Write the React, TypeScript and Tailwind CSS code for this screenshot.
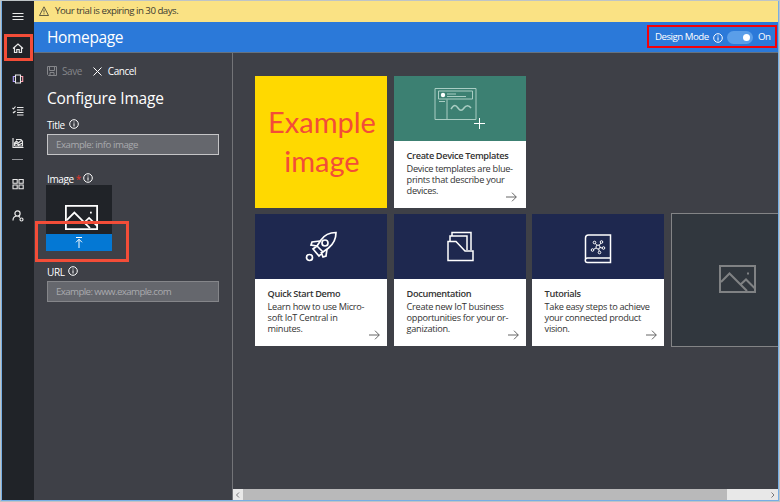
import type { ReactNode } from "react";

const stroke = {
  fill: "none",
  stroke: "currentColor",
} as const;

function InfoIcon() {
  return (
    <svg className="size-[10px] shrink-0" viewBox="0 0 10 10" {...stroke} strokeWidth="1">
      <circle cx="5" cy="5" r="4.3" />
      <path d="M5 4.3v3.2M5 2.5v1" />
    </svg>
  );
}

function PictureIcon({ className }: { className: string }) {
  return (
    <svg className={className} viewBox="0 0 37 28" {...stroke} strokeWidth="2">
      <path d="M1 1h35v26H1z" />
      <path d="M2 17l8.500-8.500L28 26M21 20l6-5.500 9 9M22 20l6 6" />
      <path d="M28 8.500h2" />
    </svg>
  );
}

function ArrowIcon({ className }: { className: string }) {
  return (
    <svg
      className={`absolute bottom-[6px] h-[10px] w-[11px] text-[#555] ${className}`}
      viewBox="0 0 11 10"
      {...stroke}
      strokeWidth="0.9"
    >
      <path d="M0 5h10.200M6 .7L10.300 5 6 9.300" />
    </svg>
  );
}

function TemplateArt() {
  return (
    <svg className="absolute left-[40px] top-[11px] h-[43px] w-[53px]" viewBox="0 0 53 43" {...stroke}>
      <g stroke="#a9cdc3" strokeWidth="1">
        <path d="M1 1.500h41v31H1zM4.500 4h34v8h-34zM13 12.500V32M5 14.500h6M13 7h9M13 9.500h19" />
        <path d="M17 22c3-5 5-4 7-1s4 3 6 0 5-3 7 0" strokeWidth="1.500" />
      </g>
      <circle cx="9" cy="8" r="2.200" fill="white" stroke="none" />
      <path d="M45.500 31v11M40 36.500h11" stroke="white" />
    </svg>
  );
}

function RocketArt() {
  return (
    <svg className="absolute left-[50px] top-[17px] h-[31px] w-[33px]" viewBox="0 0 33 31" {...stroke} strokeWidth="1.700">
      <path d="M31 1.500c-7 0-12 3-15 7.500l-4 6 6 6 5.500-4C28.500 13 31 8 31 1.500z" />
      <circle cx="20" cy="12" r="3" />
      <path d="M15 10l-8 1-1 3 6 1M22 18l-1 7-3 1-2-5M12 15l-4 3 6 7 4-4" />
      <circle cx="4.500" cy="26.500" r="3" />
    </svg>
  );
}

function FolderArt() {
  return (
    <svg className="absolute left-[53px] top-[17px] h-[31px] w-[27px]" viewBox="0 0 27 31" {...stroke} strokeWidth="1.500">
      <path d="M1 10.500h8l9 9.500h8v9.500H1zM3 10V5h17v14M5 5V1.500h19V19" />
    </svg>
  );
}

function BookArt() {
  return (
    <svg className="absolute left-[52px] top-[19px] h-[31px] w-[28px]" viewBox="0 0 28 31" {...stroke} strokeWidth="1.500">
      <path d="M26.500 25H3.500c-3 0-3 4.500 0 4.500h23V2H4.500C2.500 2 1.500 3 1.500 5v22" />
      <g strokeWidth="1">
        <circle cx="14" cy="14" r="2" />
        <circle cx="10.500" cy="9.500" r="1.300" />
        <circle cx="17.500" cy="9" r="1.300" />
        <circle cx="19.500" cy="15" r="1.300" />
        <circle cx="15.500" cy="19.500" r="1.300" />
        <circle cx="8.500" cy="17" r="1.300" />
        <path d="M11.500 10.500l1.500 2M17 10l-2 2.500M18 15l-2-.5M15.200 18l-.5-2M9.700 16.300l2.300-1.300" />
      </g>
    </svg>
  );
}

function Tile({
  art,
  title,
  lines,
  color = "bg-[#1e284f]",
  arrow = "right-[7px]",
}: {
  art: ReactNode;
  title: string;
  lines: string[];
  color?: string;
  arrow?: string;
}) {
  return (
    <article className="relative h-[132px] w-[132px] shrink-0 bg-white text-[#333]">
      <div className={`relative h-[65px] text-white ${color}`}>{art}</div>
      <div className="whitespace-nowrap pl-[12.6px] pt-[9px]">
        <h2 className="text-[9.2px] font-semibold leading-[12px] tracking-[-0.35px]">{title}</h2>
        <div className="mt-[1px] text-[9.2px] leading-[11px] tracking-[-0.3px]">
          {lines.map((line) => (
            <p key={line}>{line}</p>
          ))}
        </div>
      </div>
      <ArrowIcon className={arrow} />
    </article>
  );
}

function Sidebar() {
  return (
    <nav className="relative flex w-[32px] shrink-0 flex-col items-center bg-[#202328] pr-px text-[#e9e9e9]">
      <svg className="mt-[10px] size-[12px]" viewBox="0 0 12 12" {...stroke}>
        <path d="M.5 2.500h11M.5 5.500h11M.5 8.500h11" strokeWidth="1.200" />
      </svg>
      <svg className="mt-[19px] size-[12px]" viewBox="0 0 12 12" {...stroke} strokeWidth="1.200">
        <path d="M1 6.500L6 2l5 4.500M2.500 5.500v5h2.300V7.500h2.400v3h2.300v-5" />
      </svg>
      <svg className="mt-[19px] size-[12px]" viewBox="0 0 12 12" {...stroke} strokeWidth="1.100">
        <path d="M3.500 2h5v8h-5z" />
        <path d="M3 3.500H1.300v5H3" stroke="#b7a4ff" />
        <path d="M9 3.500h1.700v5H9" stroke="#ff9eae" />
      </svg>
      <svg className="mt-[20px] size-[12px]" viewBox="0 0 12 12" {...stroke} strokeWidth="1.100">
        <path d="M5 2.500h6.500M5 5h6.500M5 7.500h6.500M5 10h6.500M.5 3l1 1L3.500 1.500M1 7l.7.700L3.500 6" />
      </svg>
      <svg className="mt-[20px] size-[12px]" viewBox="0 0 12 12" {...stroke} strokeWidth="1.100">
        <path d="M1 1v9.500h10.500M2.500 9V6l2-2 2 2 2-2h2v5H2.500M4 2.500h5l1 1.500M2.500 7.500l2-1.500 2 2 4-2" />
      </svg>
      <div className="mt-[10px] h-px w-[11px] bg-[#94969a]" />
      <svg className="mt-[18px] size-[12px]" viewBox="0 0 12 12" {...stroke} strokeWidth="1.100">
        <path d="M1 1.500h4.200v3.700H1zM7 1.500h4.200v3.700H7zM1 7h4.200v3.700H1zM7 7h4.200v3.700H7z" />
      </svg>
      <svg className="mt-[20px] size-[12px]" viewBox="0 0 12 12" {...stroke} strokeWidth="1.200">
        <circle cx="5.500" cy="3.500" r="2.600" />
        <path d="M1 10.500c0-2.500 1.500-4.200 3.500-4.500M6.500 6l1.500 1.500" />
        <circle cx="9.500" cy="9.500" r="1.500" />
      </svg>
      <div className="absolute left-[2px] top-[33px] h-[27px] w-[29px] border-[3px] border-[#f34d38]" />
    </nav>
  );
}

function Label({ text, required }: { text: string; required?: boolean }) {
  return (
    <div className="flex h-[12px] items-center text-[10px] leading-[12px] tracking-[-0.4px] text-white">
      <span>{text}</span>
      {required && <span className="ml-[2px] -mr-[2px] text-[#e0362b]">*</span>}
      <span className="ml-[4px] -mt-[2px] flex">
        <InfoIcon />
      </span>
    </div>
  );
}

function ConfigPanel() {
  return (
    <aside className="w-[199px] shrink-0 border-r border-[#737478] bg-[#3e4047] pl-[13px] text-white">
      <div className="mt-[12px] flex h-[12px] items-center text-[10px] tracking-[-0.45px]">
        <svg className="size-[10px] text-[#85868a]" viewBox="0 0 10 10" {...stroke}>
          <path d="M.5.5h9v9h-8l-1-1zM2.500.5v4h5v-4M3 9.500v-3h4v3" />
        </svg>
        <span className="ml-[5px] text-[#85868a]">Save</span>
        <svg className="ml-[11px] size-[9px]" viewBox="0 0 9 9" {...stroke}>
          <path d="M.5.5l8 8M8.500.5l-8 8" />
        </svg>
        <span className="ml-[6px]">Cancel</span>
      </div>
      <h2 className="mt-[11px] h-[20px] text-[15.5px] leading-[20px] tracking-[-0.15px]">Configure Image</h2>
      <div className="mt-[11px]">
        <Label text="Title" />
      </div>
      <div className="mt-[3px] h-[21px] w-[172px] border border-[#c5c5c7] bg-[#65676d] pl-[8px] text-[9.7px] leading-[19px] tracking-[-0.48px] text-[#a9aaad]">
        Example: info image
      </div>
      <div className="mt-[18px]">
        <Label text="Image" required />
      </div>
      <div className="relative -ml-px h-[66px] w-[66px] bg-[#202328]">
        <PictureIcon className="absolute left-[19px] top-[20px] h-[25px] w-[33px]" />
        <div className="absolute inset-x-0 bottom-0 flex h-[17px] items-center justify-center bg-[#0478d4]">
          <svg className="h-[11px] w-[8px]" viewBox="0 0 8 11" {...stroke}>
            <path d="M1 .5h6M4 2v9M1 5.300l3-3 3 3" />
          </svg>
        </div>
        <div className="absolute -left-[11px] top-[36px] h-[41px] w-[94px] border-[3px] border-[#f34d38]" />
      </div>
      <div className="mt-[15px]">
        <Label text="URL" />
      </div>
      <div className="mt-[3px] h-[21px] w-[172px] border border-[#85868a] bg-[#65676d] pl-[8px] text-[9.7px] leading-[19px] tracking-[-0.6px] text-[#a9aaad]">
        Example: www.example.com
      </div>
    </aside>
  );
}

export default function App() {
  return (
    <div className="h-[502px] w-[780px] overflow-hidden border-x border-y border-[#bec4c6] font-['Open_Sans','Noto_Sans',sans-serif]">
      <div className="flex h-[500px] w-[778px] border-x border-b border-[#77aee4]">
        <Sidebar />
        <div className="flex min-w-0 flex-1 flex-col">
          <div className="flex h-[21px] shrink-0 items-center bg-[#fae284] pb-[2px] pl-[5px] text-[9.7px] leading-[12px] tracking-[-0.5px] text-[#3c3b31]">
            <svg className="mr-[6px] h-[10px] w-[10px]" viewBox="0 0 10 10" {...stroke} strokeWidth=".8">
              <path d="M5 .8L9.500 9.500h-9zM5 3.500v3M5 7.300v1" />
            </svg>
            Your trial is expiring in 30 days.
          </div>
          <header className="relative flex h-[31px] shrink-0 items-center border-b border-[#66727f] bg-[#2b79d9] pl-[13px] text-white">
            <h1 className="text-[15.5px] leading-[20px] tracking-[-0.35px]">Homepage</h1>
            <div className="absolute left-[613px] top-[3px] flex h-[23px] w-[130px] items-center border-2 border-[#f50008] pl-[6px] pt-[2px] text-[9.7px] tracking-[-0.5px]">
              <span className="w-[58px] whitespace-nowrap">Design Mode</span>
              <InfoIcon />
              <span className="ml-[4px] flex h-[13px] w-[26px] items-center justify-end rounded-full bg-[#5a9ee9] pr-[3px]">
                <span className="size-[7px] rounded-full bg-white" />
              </span>
              <span className="ml-[5px]">On</span>
            </div>
          </header>
          <div className="flex min-h-0 flex-1">
            <ConfigPanel />
            <main className="flex min-w-0 flex-1 flex-col justify-between overflow-hidden bg-[#3e4047]">
              <div className="flex flex-col gap-[6px] pl-[22px] pt-[23px]">
                <div className="flex gap-[7px]">
                  <div className="flex h-[132px] w-[132px] flex-col items-center justify-center bg-[#ffd900] pb-[3px] pl-[2px] font-[Lato] text-[29px] leading-[39px] text-[#f34d38]">
                    <span>Example</span>
                    <span>image</span>
                  </div>
                  <Tile
                    art={<TemplateArt />}
                    color="bg-[#3c8072]"
                    arrow="right-[9px]"
                    title="Create Device Templates"
                    lines={["Device templates are blue-", "prints that describe your", "devices."]}
                  />
                </div>
                <div className="flex gap-[7px]">
                  <Tile
                    art={<RocketArt />}
                    title="Quick Start Demo"
                    lines={["Learn how to use Micro-", "soft IoT Central in", "minutes."]}
                  />
                  <Tile
                    art={<FolderArt />}
                    title="Documentation"
                    lines={["Create new IoT business", "opportunities for your or-", "ganization."]}
                  />
                  <div className="-ml-px flex gap-[7px]">
                    <Tile
                      art={<BookArt />}
                      title="Tutorials"
                      lines={["Take easy steps to achieve", "your connected product", "vision."]}
                    />
                    <div className="-mt-px flex h-[134px] w-[134px] shrink-0 items-center justify-center border border-[#838486] bg-[#31373e] pb-[2px] pr-[2px] text-[#808284]">
                      <PictureIcon className="h-[28px] w-[37px]" />
                    </div>
                  </div>
                </div>
              </div>
              <div className="flex h-[11px] items-center bg-[#e8e8e8] text-[#77777a]">
                <svg className="h-[10px] w-[10px]" viewBox="0 0 10 10" {...stroke}>
                  <path d="M6 2.500L3.500 5 6 7.500" />
                </svg>
                <div className="h-[11px] w-[484px] bg-[#b9b9ba]" />
                <svg className="ml-auto h-[10px] w-[10px]" viewBox="0 0 10 10" {...stroke}>
                  <path d="M3.500 2.500L6 5 3.500 7.500" />
                </svg>
              </div>
            </main>
          </div>
        </div>
      </div>
    </div>
  );
}
